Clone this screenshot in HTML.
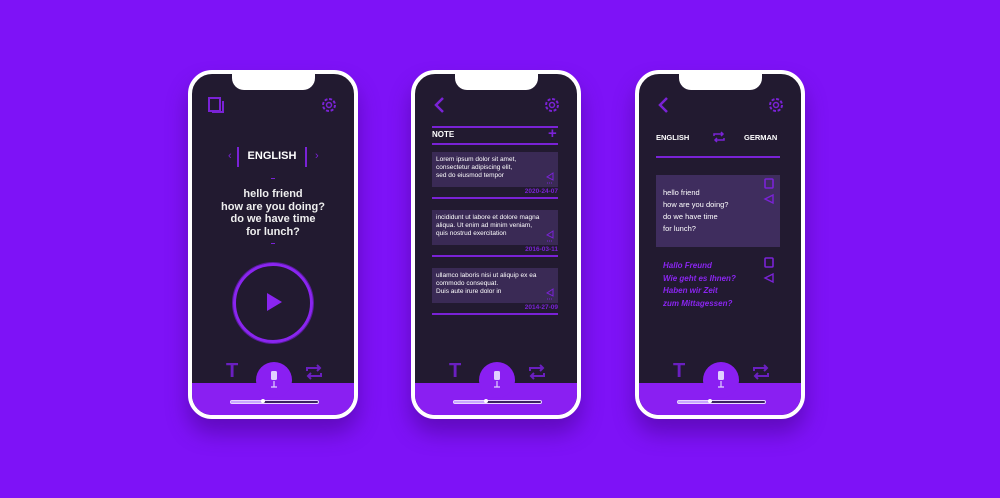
<!DOCTYPE html><html><head><style>
*{margin:0;padding:0;box-sizing:border-box}
body{width:1000px;height:498px;overflow:hidden;background:#7e12f7;font-family:"Liberation Sans",sans-serif;position:relative}
.ph{position:absolute;top:70px;width:170px;height:349px;border:4px solid #fff;border-radius:24px;background:#221a30;overflow:hidden;box-shadow:0 14px 22px rgba(60,0,120,.45)}
.notch{position:absolute;left:40px;top:-4px;width:83px;height:20px;background:#fff;border-radius:0 0 12px 12px}
.band{position:absolute;left:0;right:0;bottom:0;height:32px;background:#8a1ff2}
.mic{position:absolute;left:64px;top:288px;width:36px;height:36px;border-radius:50%;background:#8a1ff2}
.sl{position:absolute;left:38px;top:326px;width:89px;height:4px;border:1px solid #e8d8ff;border-radius:3px;background:#3a2060}
.sl:before{content:"";position:absolute;left:0;top:0;width:32px;height:2px;background:#c9a6ff}
.sl:after{content:"";position:absolute;left:30px;top:-2px;width:4px;height:4px;border-radius:50%;background:#fff}
.a{position:absolute}
svg{position:absolute;overflow:visible}
.w{color:#fff}
</style></head><body>

<!-- phone 1 -->
<div class="ph" style="left:188px">
<div class="notch"></div>
<svg style="left:16px;top:23px" width="16" height="16"><rect x="1" y="1" width="11" height="13" fill="none" stroke="#7a22d6" stroke-width="2"/><path d="M4 15h11V4" fill="none" stroke="#7a22d6" stroke-width="2"/></svg>
<svg style="left:128px;top:22px" width="18" height="18" viewBox="0 0 18 18"><circle cx="9" cy="9" r="6" fill="none" stroke="#7a22d6" stroke-width="2" stroke-dasharray="3 1.7"/><circle cx="9" cy="9" r="2.5" fill="none" stroke="#7a22d6" stroke-width="1.5"/></svg>
<div class="a" style="left:36px;top:76px;color:#7a22d6;font-size:11px">‹</div>
<div class="a" style="left:123px;top:76px;color:#7a22d6;font-size:11px">›</div>
<div class="a" style="left:45px;top:73px;width:2px;height:20px;background:#7a22d6"></div>
<div class="a" style="left:113px;top:73px;width:2px;height:20px;background:#7a22d6"></div>
<div class="a w" style="left:47px;width:66px;top:76px;text-align:center;font-weight:bold;font-size:11px">ENGLISH</div>
<div class="a" style="left:79px;top:104px;width:4px;height:1px;background:#7a22d6"></div>
<div class="a w" style="left:0;width:162px;top:114px;text-align:center;font-size:11px;line-height:12.5px;font-weight:bold;color:#eee">hello friend<br>how are you doing?<br>do we have time<br>for lunch?</div>
<div class="a" style="left:79px;top:169px;width:4px;height:1px;background:#7a22d6"></div>
<div class="a" style="left:41px;top:189px;width:80px;height:80px;border-radius:50%;border:3px solid #8a25f0;box-shadow:0 0 0 1px #5a1aa0"></div>
<svg style="left:74px;top:218px" width="18" height="20"><path d="M1 1L16 10L1 19Z" fill="#8a25f0"/></svg>
<div class="band"></div>
<div class="a" style="left:34px;top:286px;color:#6a1fc0;font-weight:bold;font-size:20px">T</div>
<svg style="left:112px;top:290px" width="20" height="16"><path d="M3 7V4h13M13 1l3 3-3 3M17 9v3H4M7 15l-3-3 3-3" fill="none" stroke="#6a1fc0" stroke-width="2"/></svg>
<div class="mic"></div>
<svg style="left:77px;top:297px" width="10" height="18"><rect x="2" y="0" width="6" height="9" rx="1.5" fill="#e0d0ff"/><path d="M5 10v6M2 16h6" stroke="#e0d0ff" stroke-width="1.2"/></svg>
<div class="sl"></div>
</div>

<!-- phone 2 -->
<div class="ph" style="left:411px">
<div class="notch"></div>
<svg style="left:18px;top:22px" width="12" height="18"><path d="M10 2L3 9l7 7" fill="none" stroke="#7a22d6" stroke-width="2.5"/></svg>
<svg style="left:128px;top:22px" width="18" height="18" viewBox="0 0 18 18"><circle cx="9" cy="9" r="6" fill="none" stroke="#7a22d6" stroke-width="2" stroke-dasharray="3 1.7"/><circle cx="9" cy="9" r="2.5" fill="none" stroke="#7a22d6" stroke-width="1.5"/></svg>
<div class="a" style="left:17px;top:52px;width:126px;height:2px;background:#7a22d6"></div>
<div class="a w" style="left:17px;top:56px;font-size:8px;font-weight:bold">NOTE</div>
<div class="a" style="left:133px;top:51px;color:#7a22d6;font-size:15px;font-weight:bold">+</div>
<div class="a" style="left:17px;top:69px;width:126px;height:2px;background:#7a22d6"></div>

<div class="a" style="left:17px;top:78px;width:126px;height:35px;background:#3a2a55"></div>
<div class="a w" style="left:21px;top:82px;font-size:6.5px;line-height:8px">Lorem ipsum dolor sit amet,<br>consectetur adipiscing elit,<br>sed do eiusmod tempor</div>
<svg style="left:131px;top:98px" width="8" height="12"><path d="M7 1L1 5l6 3Z" fill="none" stroke="#7a22d6"/><path d="M1 11h6" stroke="#7a22d6" stroke-dasharray="1 1"/></svg>
<div class="a" style="left:97px;top:114px;width:46px;text-align:right;color:#7a22d6;font-size:6.5px;font-weight:bold">2020-24-07</div>
<div class="a" style="left:17px;top:123px;width:126px;height:2px;background:#7a22d6"></div>

<div class="a" style="left:17px;top:136px;width:126px;height:35px;background:#3a2a55"></div>
<div class="a w" style="left:21px;top:140px;font-size:6.5px;line-height:8px">incididunt ut labore et dolore magna<br>aliqua. Ut enim ad minim veniam,<br>quis nostrud exercitation</div>
<svg style="left:131px;top:156px" width="8" height="12"><path d="M7 1L1 5l6 3Z" fill="none" stroke="#7a22d6"/><path d="M1 11h6" stroke="#7a22d6" stroke-dasharray="1 1"/></svg>
<div class="a" style="left:97px;top:172px;width:46px;text-align:right;color:#7a22d6;font-size:6.5px;font-weight:bold">2016-03-11</div>
<div class="a" style="left:17px;top:181px;width:126px;height:2px;background:#7a22d6"></div>

<div class="a" style="left:17px;top:194px;width:126px;height:35px;background:#3a2a55"></div>
<div class="a w" style="left:21px;top:198px;font-size:6.5px;line-height:8px">ullamco laboris nisi ut aliquip ex ea<br>commodo consequat.<br>Duis aute irure dolor in</div>
<svg style="left:131px;top:214px" width="8" height="12"><path d="M7 1L1 5l6 3Z" fill="none" stroke="#7a22d6"/><path d="M1 11h6" stroke="#7a22d6" stroke-dasharray="1 1"/></svg>
<div class="a" style="left:97px;top:230px;width:46px;text-align:right;color:#7a22d6;font-size:6.5px;font-weight:bold">2014-27-09</div>
<div class="a" style="left:17px;top:239px;width:126px;height:2px;background:#7a22d6"></div>

<div class="band"></div>
<div class="a" style="left:34px;top:286px;color:#6a1fc0;font-weight:bold;font-size:20px">T</div>
<svg style="left:112px;top:290px" width="20" height="16"><path d="M3 7V4h13M13 1l3 3-3 3M17 9v3H4M7 15l-3-3 3-3" fill="none" stroke="#6a1fc0" stroke-width="2"/></svg>
<div class="mic"></div>
<svg style="left:77px;top:297px" width="10" height="18"><rect x="2" y="0" width="6" height="9" rx="1.5" fill="#e0d0ff"/><path d="M5 10v6M2 16h6" stroke="#e0d0ff" stroke-width="1.2"/></svg>
<div class="sl"></div>
</div>

<!-- phone 3 -->
<div class="ph" style="left:635px">
<div class="notch"></div>
<svg style="left:18px;top:22px" width="12" height="18"><path d="M10 2L3 9l7 7" fill="none" stroke="#7a22d6" stroke-width="2.5"/></svg>
<svg style="left:128px;top:22px" width="18" height="18" viewBox="0 0 18 18"><circle cx="9" cy="9" r="6" fill="none" stroke="#7a22d6" stroke-width="2" stroke-dasharray="3 1.7"/><circle cx="9" cy="9" r="2.5" fill="none" stroke="#7a22d6" stroke-width="1.5"/></svg>
<div class="a w" style="left:17px;top:59px;font-size:7.5px;font-weight:bold">ENGLISH</div>
<svg style="left:74px;top:58px" width="12" height="10"><path d="M1 4V2h9M8 0l2 2-2 2M11 6v2H2M4 10L2 8l2-2" fill="none" stroke="#7a22d6" stroke-width="1.5"/></svg>
<div class="a w" style="left:105px;top:59px;font-size:7.5px;font-weight:bold">GERMAN</div>
<div class="a" style="left:17px;top:82px;width:124px;height:2px;background:#7a22d6"></div>
<div class="a" style="left:17px;top:101px;width:124px;height:72px;background:#3f2d5e"></div>
<div class="a w" style="left:24px;top:113px;font-size:7.5px;line-height:12px">hello friend<br>how are you doing?<br>do we have time<br>for lunch?</div>
<svg style="left:124px;top:104px" width="12" height="30"><rect x="2" y="1" width="8" height="9" rx="1" fill="none" stroke="#7a22d6" stroke-width="1.6"/><path d="M10 17L2 21l8 4Z" fill="none" stroke="#7a22d6" stroke-width="1.4"/></svg>
<div class="a" style="left:24px;top:186px;font-size:8px;line-height:12.5px;font-weight:bold;font-style:italic;color:#8a25f0">Hallo Freund<br>Wie geht es Ihnen?<br>Haben wir Zeit<br>zum Mittagessen?</div>
<svg style="left:124px;top:183px" width="12" height="30"><rect x="2" y="1" width="8" height="9" rx="1" fill="none" stroke="#7a22d6" stroke-width="1.6"/><path d="M10 17L2 21l8 4Z" fill="none" stroke="#7a22d6" stroke-width="1.4"/></svg>
<div class="band"></div>
<div class="a" style="left:34px;top:286px;color:#6a1fc0;font-weight:bold;font-size:20px">T</div>
<svg style="left:112px;top:290px" width="20" height="16"><path d="M3 7V4h13M13 1l3 3-3 3M17 9v3H4M7 15l-3-3 3-3" fill="none" stroke="#6a1fc0" stroke-width="2"/></svg>
<div class="mic"></div>
<svg style="left:77px;top:297px" width="10" height="18"><rect x="2" y="0" width="6" height="9" rx="1.5" fill="#e0d0ff"/><path d="M5 10v6M2 16h6" stroke="#e0d0ff" stroke-width="1.2"/></svg>
<div class="sl"></div>
</div>

</body></html>
